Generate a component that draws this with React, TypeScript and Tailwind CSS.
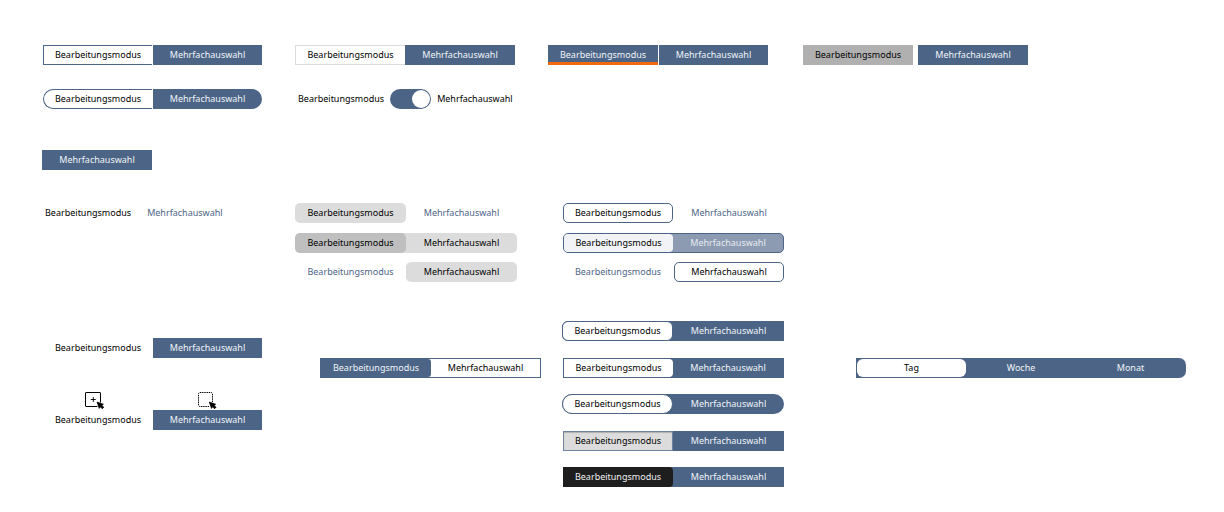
import React from 'react';
import { clsx } from 'clsx';

const BLUE = 'bg-[#4c6587] text-[#f1f4f8]';
const BASE = 'flex h-5 items-center justify-center text-[9px] leading-4';
const CELL = 'w-[110px]';

type SegmentProps = {
  children: React.ReactNode;
  active?: boolean;
  className?: string;
};

function Segment({ children, active = false, className }: SegmentProps) {
  return (
    <button type="button" aria-pressed={active} className={clsx(BASE, className)}>
      {children}
    </button>
  );
}

type GroupProps = {
  children: React.ReactNode;
  className?: string;
};

function Group({ children, className }: GroupProps) {
  return (
    <div role="group" aria-label="Modus" className={clsx('flex', className)}>
      {children}
    </div>
  );
}

function Cursor() {
  return (
    <path
      d="M12 10 L18.4 12.2 L16.8 13.4 L18.8 15.2 L17.2 16.8 L15.3 14.8 L14.2 16.4 Z"
      fill="#000"
      stroke="#000"
      strokeWidth="0.7"
      strokeLinejoin="round"
    />
  );
}

function AddIcon() {
  return (
    <svg width="20" height="18" viewBox="0 0 20 18" fill="none" aria-hidden="true">
      <path
        d="M15.5 10.5 V1 Q15.5 0.5 15 0.5 H1 Q0.5 0.5 0.5 1 V14 Q0.5 14.5 1 14.5 H12.5"
        stroke="#000"
      />
      <path d="M8.3 5 V10 M5.8 7.5 H10.8" stroke="#000" strokeWidth="0.9" />
      <Cursor />
    </svg>
  );
}

function SelectIcon() {
  return (
    <svg width="20" height="18" viewBox="0 0 20 18" fill="none" aria-hidden="true">
      <path
        d="M14.5 10 V2 Q14.5 0.5 13 0.5 H2 Q0.5 0.5 0.5 2 V13 Q0.5 14.5 2 14.5 H11.5"
        stroke="#000"
        strokeDasharray="1.4 0.8"
      />
      <g transform="translate(-0.7 0)">
        <Cursor />
      </g>
    </svg>
  );
}

export default function App() {
  return (
    <main className="bg-white pt-[45px] pb-6 font-['Noto_Sans','Open_Sans',sans-serif] text-black">
      <section className="grid grid-cols-[252px_253px_255px_1fr] gap-y-6 pl-[43px]">
        <Group className="gap-px">
          <Segment active className="w-[109px] border border-r-0 border-[#4c6587]">
            Bearbeitungsmodus
          </Segment>
          <Segment className={clsx('w-[109px]', BLUE)}>Mehrfachauswahl</Segment>
        </Group>
        <Group>
          <Segment active className={clsx(CELL, 'border border-r-0 border-[#dcdcdc]')}>
            Bearbeitungsmodus
          </Segment>
          <Segment className={clsx(CELL, BLUE)}>Mehrfachauswahl</Segment>
        </Group>
        <Group className="gap-px">
          <Segment active className={clsx(CELL, BLUE, 'shadow-[inset_0_-3px_0_#f26a10]')}>
            Bearbeitungsmodus
          </Segment>
          <Segment className={clsx('w-[109px]', BLUE)}>Mehrfachauswahl</Segment>
        </Group>
        <Group className="gap-[5px]">
          <Segment active className={clsx(CELL, 'bg-[#b0b0b0]')}>
            Bearbeitungsmodus
          </Segment>
          <Segment className={clsx(CELL, BLUE)}>Mehrfachauswahl</Segment>
        </Group>

        <Group className="gap-px">
          <Segment
            active
            className="w-[109px] rounded-l-[10px] border border-r-0 border-[#4c6587]"
          >
            Bearbeitungsmodus
          </Segment>
          <Segment className={clsx('w-[109px] rounded-r-[10px]', BLUE)}>Mehrfachauswahl</Segment>
        </Group>
        <div className="flex h-5 items-center gap-[6px] pl-[3px] text-[9px] leading-4">
          <label htmlFor="mode">Bearbeitungsmodus</label>
          <input
            id="mode"
            type="checkbox"
            role="switch"
            defaultChecked
            className="flex h-5 w-[41px] appearance-none items-center rounded-full bg-[#4c6587] px-px before:size-[18px] before:rounded-full before:bg-white before:content-[''] checked:justify-end"
          />
          <label htmlFor="mode">Mehrfachauswahl</label>
        </div>
      </section>

      <section className="mt-[41px] pl-[42px]">
        <Segment className={clsx(CELL, BLUE)}>Mehrfachauswahl</Segment>
      </section>

      <section className="mt-[33px] grid grid-cols-[250px_268px_1fr] pl-[45px]">
        <Group className="gap-4">
          <Segment active>Bearbeitungsmodus</Segment>
          <Segment className="text-[#4c6587]">Mehrfachauswahl</Segment>
        </Group>
        <div className="flex h-[79px] flex-col items-start justify-between">
          <Group>
            <Segment active className="w-[111px] rounded-[5px] bg-[#dcdcdc]">
              Bearbeitungsmodus
            </Segment>
            <Segment className="w-[111px] text-[#4c6587]">Mehrfachauswahl</Segment>
          </Group>
          <Group className="rounded-[5px] bg-[#dcdcdc]">
            <Segment active className="w-[111px] rounded-[5px] bg-[#bfbfbf]">
              Bearbeitungsmodus
            </Segment>
            <Segment className="w-[111px]">Mehrfachauswahl</Segment>
          </Group>
          <Group>
            <Segment className="w-[111px] text-[#4c6587]">Bearbeitungsmodus</Segment>
            <Segment active className="w-[111px] rounded-[5px] bg-[#dcdcdc]">
              Mehrfachauswahl
            </Segment>
          </Group>
        </div>
        <div className="flex h-[79px] flex-col items-start justify-between">
          <Group className="gap-px">
            <Segment active className={clsx(CELL, 'rounded-[5px] border border-[#4c6587]')}>
              Bearbeitungsmodus
            </Segment>
            <Segment className={clsx(CELL, 'text-[#4c6587]')}>Mehrfachauswahl</Segment>
          </Group>
          <Group className="h-5 items-center rounded-[5px] border border-[#4c6587] bg-[#8c9bb2]">
            <Segment active className="h-[18px] w-[109px] rounded-[4px] bg-[#f1f3f6]">
              Bearbeitungsmodus
            </Segment>
            <Segment className={clsx(CELL, 'text-[#e6eaf0]')}>Mehrfachauswahl</Segment>
          </Group>
          <Group className="gap-px">
            <Segment className={clsx(CELL, 'text-[#4c6587]')}>Bearbeitungsmodus</Segment>
            <Segment active className={clsx(CELL, 'rounded-[5px] border border-[#4c6587]')}>
              Mehrfachauswahl
            </Segment>
          </Group>
        </div>
      </section>

      <section className="mt-[39px] grid grid-cols-[277px_242px_294px_1fr] items-start pl-[43px]">
        <div className="flex flex-col gap-[34px] pt-[17px]">
          <Group>
            <Segment active className={CELL}>
              Bearbeitungsmodus
            </Segment>
            <Segment className={clsx('w-[109px]', BLUE)}>Mehrfachauswahl</Segment>
          </Group>
          <div className="flex flex-col">
            <div className="flex">
              <div className="w-[110px] pl-[42px]">
                <AddIcon />
              </div>
              <div className="w-[110px] pl-[45px]">
                <SelectIcon />
              </div>
            </div>
            <Group>
              <Segment active className={CELL}>
                Bearbeitungsmodus
              </Segment>
              <Segment className={clsx('w-[109px]', BLUE)}>Mehrfachauswahl</Segment>
            </Group>
          </div>
        </div>

        <div className="flex pt-[37px]">
          <Group className="h-5 items-center border border-[#4c6587]">
            <Segment className={clsx('h-[18px] rounded-r-[3px]', CELL, BLUE)}>
              Bearbeitungsmodus
            </Segment>
            <Segment active className="h-[18px] w-[109px]">
              Mehrfachauswahl
            </Segment>
          </Group>
        </div>

        <div className="flex h-[166px] w-[222px] flex-col items-end justify-between">
          <Group className="w-[222px] rounded-l-[6px] bg-[#4c6587]">
            <Segment
              active
              className="w-[111px] rounded-[6px] border border-[#4c6587] bg-white"
            >
              Bearbeitungsmodus
            </Segment>
            <Segment className="w-[111px] text-[#f1f4f8]">Mehrfachauswahl</Segment>
          </Group>
          <Group className="h-5 w-[221px] items-center bg-[#4c6587] p-px">
            <Segment active className="h-[18px] w-[109px] rounded-r-[4px] bg-white">
              Bearbeitungsmodus
            </Segment>
            <Segment className="h-[18px] w-[110px] text-[#f1f4f8]">Mehrfachauswahl</Segment>
          </Group>
          <Group className="w-[222px] rounded-[10px] bg-[#4c6587]">
            <Segment
              active
              className="w-[111px] rounded-[10px] border border-[#4c6587] bg-white"
            >
              Bearbeitungsmodus
            </Segment>
            <Segment className="w-[111px] text-[#f1f4f8]">Mehrfachauswahl</Segment>
          </Group>
          <Group className="w-[221px] bg-[#4c6587]">
            <Segment
              active
              className={clsx(
                CELL,
                'border border-[#6f839e] bg-[#dcdcdc] shadow-[inset_0_1px_1px_#b0b0b0]',
              )}
            >
              Bearbeitungsmodus
            </Segment>
            <Segment className="w-[111px] text-[#f1f4f8]">Mehrfachauswahl</Segment>
          </Group>
          <Group className="w-[221px] bg-[#4c6587]">
            <Segment active className={clsx(CELL, 'rounded-r-[4px] bg-[#1e1e1e] text-[#f0f0f0]')}>
              Bearbeitungsmodus
            </Segment>
            <Segment className="w-[111px] text-[#f1f4f8]">Mehrfachauswahl</Segment>
          </Group>
        </div>

        <div className="flex pt-[37px]">
          <Group className="h-5 items-center rounded-r-[7px] bg-[#4c6587] p-px">
            <Segment active className="h-[18px] w-[109px] rounded-[6px] bg-white">
              Tag
            </Segment>
            <Segment className="h-[18px] w-[110px] text-[#f1f4f8]">Woche</Segment>
            <Segment className="h-[18px] w-[109px] text-[#f1f4f8]">Monat</Segment>
          </Group>
        </div>
      </section>
    </main>
  );
}
